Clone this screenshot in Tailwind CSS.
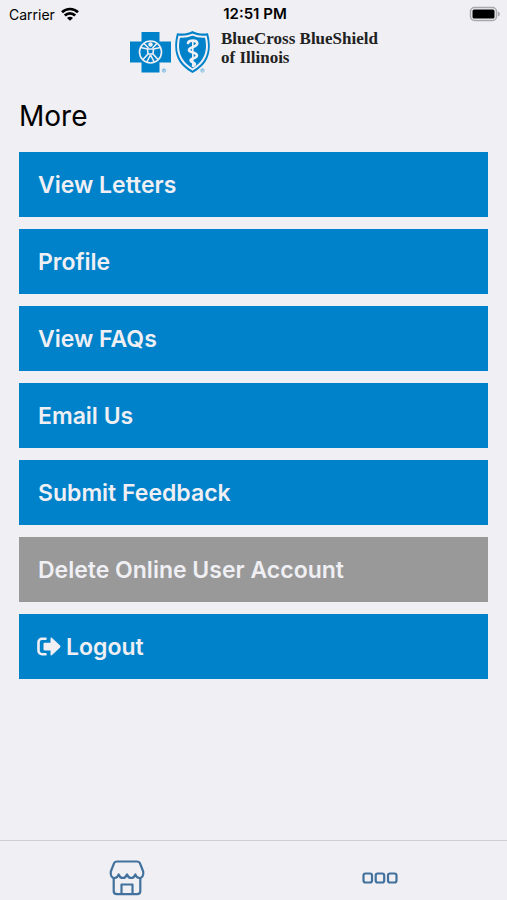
<!DOCTYPE html>
<html lang="en">

<head>
    <meta charset="UTF-8">
    <meta name="viewport" content="width=device-width, initial-scale=1.0">
    <script src="https://cdn.jsdelivr.net/npm/@tailwindcss/browser@4"></script>
    <title>More</title>
</head>

<body class="bg-[#efeff4] font-['Inter',sans-serif] text-black">

    <div class="flex min-h-screen flex-col">

        <!-- status bar -->
        <div class="grid h-7 grid-cols-3 items-center pl-[9px] pr-[6px] text-[14px]">
            <div class="flex items-center gap-[6px]">
                <span>Carrier</span>
                <svg class="h-[14px] w-[18px]" viewBox="0 0 18 14" fill="none" stroke="#000" stroke-width="2.7">
                    <path d="M1 5.200C5.500.900 12.500.900 17 5.200" />
                    <path d="M3.800 8.500c2.900-2.900 7.500-2.900 10.400 0" />
                    <path d="M9 13.800L6 10.900c1.700-1.600 4.300-1.600 6 0z" fill="#000" stroke="none" />
                </svg>
            </div>
            <div class="text-center text-[15px] font-semibold">12:51 PM</div>
            <svg class="h-[16px] w-[32px] justify-self-end" viewBox="0 0 32 16">
                <rect x="1.500" y="1.500" width="26" height="13" rx="4" fill="#efeff4" stroke="#a9a9ad" stroke-width="1.500" />
                <rect x="3.500" y="3.500" width="22" height="9" rx="1.500" fill="#000" />
                <path d="M29 5.500c2.500 1 2.500 4 0 5z" fill="#a9a9ad" />
            </svg>
        </div>

        <header class="flex justify-center gap-2">
            <svg class="h-[48px] w-[84px]" viewBox="0 0 84 48" fill="none" role="img" aria-label="Blue Cross Blue Shield">
                <path d="M12.500 4h18v9.500h11.500v21H30.500v10h-18v-10H1v-21h11.500z" fill="#0082ca" />
                <g stroke="#efeff4" stroke-width="1.600">
                    <circle cx="21.500" cy="24" r="11" />
                    <circle cx="21.500" cy="16.500" r="2.200" fill="#efeff4" stroke="none" />
                    <path d="M11.500 19.500l7 1.500h6l7-1.500M18.500 21l.5 5-5.500 6M24.500 21l-.5 5 5.500 6M21.500 27l-3.700 7M21.500 27l3.700 7M15 15.500l4.500 4.500M28 15.500l-4.500 4.500M19 26h5" />
                </g>
                <path d="M63.500 3c5 2.500 10 3 15.500 2.200 1 4 1.800 8 1.800 12.800 0 13-6.500 21-17.300 27C52.700 39 46.200 31 46.200 18c0-4.800.8-8.800 1.800-12.800C53.500 6 58.500 5.500 63.500 3z" fill="#0082ca" />
                <path d="M63.500 6.700c4.500 2 8.800 2.500 13.300 2 .8 3 1.200 6 1.200 9.300 0 11-5.300 18-14.500 23.500C54.300 36 49 29 49 18c0-3.300.4-6.300 1.200-9.300 4.500.5 8.800 0 13.300-2z" stroke="#efeff4" stroke-width="2" />
                <path d="M63.800 12v27" stroke="#efeff4" stroke-width="1.600" />
                <path d="M59 15c1-3 9-3.500 9.300.5 0 3.800-8.300 3-8.300 6.500 0 3 8 2.200 8 5.500 0 3-6.500 2.500-6.500 5 0 2 4.500 2 4.500 3.500 0 1-1 1.500-2 2" stroke="#efeff4" stroke-width="2.600" stroke-linecap="round" />
                <g stroke="#69b0dc" stroke-width=".8">
                    <circle cx="35" cy="42.500" r="1.700" />
                    <circle cx="73.500" cy="42.500" r="1.700" />
                    <path d="M34.500 43.500v-2h1v1M73 43.500v-2h1v1" />
                </g>
            </svg>
            <p class="pt-px font-['Liberation_Serif',serif] text-[17px] leading-[19px] font-bold text-[#222]">
                BlueCross BlueShield<br>of Illinois
            </p>
        </header>

        <main class="flex-1 px-[19px] pt-[22px]">
            <h1 class="text-[28px] leading-9">More</h1>

            <div class="mt-[18px] flex flex-col gap-3 text-[23px] font-semibold text-[#efeff4]">
                <button type="button" class="h-[65px] bg-[#0082ca] px-[19px] pt-px text-left">View Letters</button>
                <button type="button" class="h-[65px] bg-[#0082ca] px-[19px] pt-px text-left">Profile</button>
                <button type="button" class="h-[65px] bg-[#0082ca] px-[19px] pt-px text-left">View FAQs</button>
                <button type="button" class="h-[65px] bg-[#0082ca] px-[19px] pt-px text-left">Email Us</button>
                <button type="button" class="h-[65px] bg-[#0082ca] px-[19px] pt-px text-left">Submit Feedback</button>
                <button type="button" class="h-[65px] bg-[#999] px-[19px] pt-px text-left">Delete Online User Account</button>
                <button type="button" class="flex h-[65px] items-center gap-[5px] bg-[#0082ca] px-[18px] pt-px text-left">
                    <svg class="h-[20px] w-[24px]" viewBox="0 0 24 20" fill="none">
                        <path d="M8.500 1.800H5A3.500 3.500 0 0 0 1.500 5.300v8.400A3.500 3.500 0 0 0 5 17.200h3.500" stroke="#efeff4" stroke-width="2.600" stroke-linecap="round" />
                        <path d="M13.500 1.600c0-1 .9-1.300 1.600-.6l8 7.600c.5.600.5 1.200 0 1.800l-8 7.600c-.7.700-1.600.4-1.600-.6v-4H7.700c-.7 0-1.200-.5-1.200-1.200V7c0-.7.500-1.200 1.200-1.200h5.800z" fill="#efeff4" />
                    </svg>
                    Logout
                </button>
            </div>
        </main>

        <!-- tab bar -->
        <nav class="grid h-[60px] grid-cols-2 border-t border-[#cdcdd2] text-[#41719c]">
            <a href="#" aria-label="Home" class="flex items-center justify-center pt-[14px]">
                <svg class="h-[36px] w-[36px]" viewBox="0 0 36 36" fill="none" stroke="currentColor" stroke-width="2.200" stroke-linejoin="round">
                    <path d="M8 1.500h20c1.500 0 2.300.6 3 1.800l3.200 8.200c.6 4-1 6.500-3.700 6.500-2 0-3.500-1.500-4.100-3.500-.8 2-2.300 3.500-4.200 3.500s-3.400-1.500-4.200-3.500c-.8 2-2.300 3.500-4.200 3.500s-3.400-1.500-4.200-3.500C9 16.500 7.500 18 5.500 18c-2.700 0-4.300-2.500-3.700-6.500L5 3.300c.7-1.200 1.500-1.800 3-1.800z" />
                    <path d="M4.700 18v13c0 2 1.200 3.200 3.300 3.200h20c2.100 0 3.300-1.200 3.300-3.200V18M12.500 34v-9.500h11V34" />
                </svg>
            </a>
            <a href="#" aria-label="More" class="flex items-center justify-center pt-[14px]">
                <svg class="h-[12px] w-[36px]" viewBox="0 0 36 12" fill="none" stroke="currentColor" stroke-width="2.200">
                    <rect x="1.500" y="1.500" width="8.500" height="9" rx="2" />
                    <rect x="13.700" y="1.500" width="8.500" height="9" rx="2" />
                    <rect x="26" y="1.500" width="8.500" height="9" rx="2" />
                </svg>
            </a>
        </nav>
    </div>
</body>

</html>
